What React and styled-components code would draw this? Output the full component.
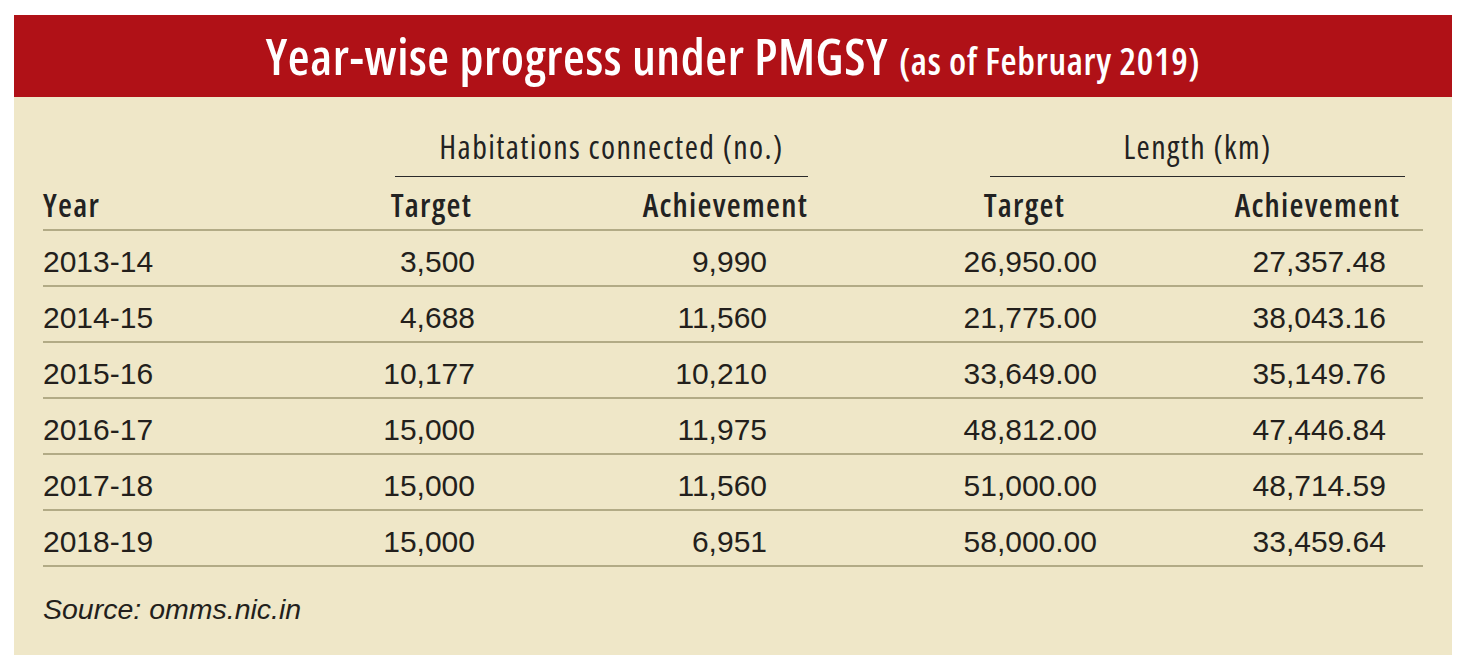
import React from "react";
import styled, { createGlobalStyle } from "styled-components";

const GlobalStyle = createGlobalStyle`
  html, body {
    margin: 0;
    padding: 0;
    background: #ffffff;
  }
`;

const Page = styled.div`
  padding: 15px 0 0 14px;
`;

const Panel = styled.div`
  width: 1438px;
  height: 640px;
  background: #efe7c8;
  display: flex;
  flex-direction: column;
`;

const TitleBar = styled.div`
  height: 82px;
  background: #b01117;
  display: flex;
  align-items: center;
  justify-content: center;
`;

const Title = styled.h1`
  margin: 0;
  color: #ffffff;
  font-family: "Open Sans", sans-serif;
  font-weight: 600;
  font-stretch: 75%;
  font-size: 50px;
  letter-spacing: 0.6px;
  line-height: 1;
  white-space: nowrap;

  small {
    font-size: 37px;
    letter-spacing: 0.7px;
    margin-left: 11px;
  }
`;

const Body = styled.div`
  padding: 0 29px;
`;

const Grid = styled.div`
  display: grid;
  grid-template-columns: 287px 145px 333px 289px 308px 18px;
`;

const GroupRow = styled(Grid)`
  height: 80px;
  align-items: end;
`;

const Group = styled.div`
  grid-column: ${(p) => p.$span};
  margin-left: ${(p) => p.$inset}px;
  border-bottom: 1.5px solid #2a2a2a;
  text-align: center;
  padding-bottom: 13px;
  padding-left: ${(p) => p.$shift || 0}px;
  font-family: "Open Sans", sans-serif;
  font-stretch: 75%;
  font-weight: 520;
  font-size: 32px;
  letter-spacing: 1.4px;
  line-height: 1;
  color: #222;
  white-space: nowrap;
`;

const Row = styled(Grid)`
  height: ${(p) => p.$h || 56}px;
  align-items: end;
  border-bottom: 2.5px solid #b2ab86;
  box-sizing: border-box;
`;

const HeadCell = styled.div`
  font-family: "Open Sans", sans-serif;
  font-stretch: 75%;
  font-weight: 560;
  font-size: 32px;
  letter-spacing: 1.25px;
  line-height: 1;
  color: #222;
  padding-bottom: 8px;
  text-align: ${(p) => (p.$left ? "left" : "right")};
  padding-right: ${(p) => p.$pr || 0}px;
`;

const Cell = styled.div`
  font-family: "Liberation Sans", Arial, sans-serif;
  font-size: 30px;
  line-height: 1;
  color: #231f1c;
  padding-bottom: 8px;
  text-align: ${(p) => (p.$left ? "left" : "right")};
  padding-right: ${(p) => p.$pr || 0}px;
`;

const Source = styled.div`
  margin-top: 26px;
  font-family: "Liberation Sans", Arial, sans-serif;
  font-style: italic;
  font-size: 28.5px;
  color: #231f1c;
`;

const rows = [
  ["2013-14", "3,500", "9,990", "26,950.00", "27,357.48"],
  ["2014-15", "4,688", "11,560", "21,775.00", "38,043.16"],
  ["2015-16", "10,177", "10,210", "33,649.00", "35,149.76"],
  ["2016-17", "15,000", "11,975", "48,812.00", "47,446.84"],
  ["2017-18", "15,000", "11,560", "51,000.00", "48,714.59"],
  ["2018-19", "15,000", "6,951", "58,000.00", "33,459.64"],
];

const App = () => {
  return (
    <Page>
      <GlobalStyle />
      <Panel>
        <TitleBar>
          <Title>
            Year-wise progress under PMGSY<small>(as of February 2019)</small>
          </Title>
        </TitleBar>
        <Body>
          <GroupRow>
            <Group $span="2 / 4" $inset={65} $shift={20}>
              Habitations connected (no.)
            </Group>
            <Group $span="4 / 6" $inset={182}>
              Length (km)
            </Group>
          </GroupRow>
          <Row $h={54}>
            <HeadCell $left>Year</HeadCell>
            <HeadCell $pr={3}>Target</HeadCell>
            <HeadCell>Achievement</HeadCell>
            <HeadCell $pr={32}>Target</HeadCell>
            <HeadCell $pr={5}>Achievement</HeadCell>
          </Row>
          {rows.map((r) => (
            <Row key={r[0]}>
              <Cell $left>{r[0]}</Cell>
              <Cell>{r[1]}</Cell>
              <Cell $pr={41}>{r[2]}</Cell>
              <Cell>{r[3]}</Cell>
              <Cell $pr={19}>{r[4]}</Cell>
            </Row>
          ))}
          <Source>Source: omms.nic.in</Source>
        </Body>
      </Panel>
    </Page>
  );
};

export default App;
